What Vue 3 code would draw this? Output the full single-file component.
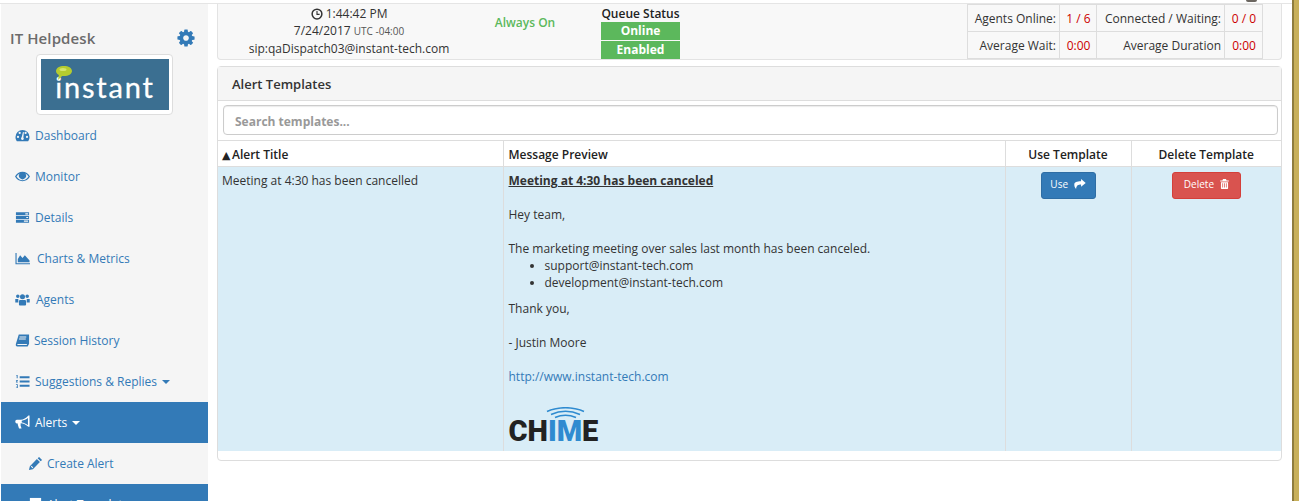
<script setup>
import { ref } from "vue";

const search = ref("");

const cog = "M1152 896q0-106-75-181t-181-75-181 75-75 181 75 181 181 75 181-75 75-181zm512-109v222q0 12-8 23t-20 13l-185 28q-19 54-39 91 35 50 107 138 10 12 10 25t-9 23q-27 37-99 108t-94 71q-12 0-26-9l-138-108q-44 23-91 38-16 136-29 186-7 28-36 28h-222q-14 0-24.5-8.5t-11.5-21.5l-28-184q-49-16-90-37l-141 107q-10 9-25 9-14 0-25-11-126-114-165-168-7-10-7-23 0-12 8-23 15-21 51-66.5t54-70.5q-27-50-41-99l-183-27q-13-2-21-12.5t-8-23.5v-222q0-12 8-23t19-13l186-28q14-46 39-92-40-57-107-138-10-12-10-24 0-10 9-23 26-36 98.5-107.5t94.5-71.5q13 0 26 10l138 107q44-23 91-38 16-136 29-186 7-28 36-28h222q14 0 24.5 8.5t11.5 21.5l28 184q49 16 90 37l142-107q9-9 24-9 13 0 25 10 129 119 165 170 7 8 7 22 0 12-8 23-15 21-51 66.5t-54 70.5q26 50 41 98l183 28q13 2 21 12.5t8 23.5z";

const icons = {
  dashboard: "M8 2a7.500 7.500 0 0 0-7.500 7.500c0 1.800.5 3.200 1.500 4.500h12c1-1.300 1.500-2.700 1.500-4.500A7.500 7.500 0 0 0 8 2zM3.200 10.700a1.200 1.200 0 1 1 0-2.400 1.200 1.200 0 0 1 0 2.400zM5 6.500a1.200 1.200 0 1 1 0-2.400 1.200 1.200 0 0 1 0 2.400zM8 12.800a1.600 1.600 0 0 1-.9-2.900L8.500 4.300l1 .2-.6 5.600A1.600 1.600 0 0 1 8 12.800zM11.300 6.500a1.200 1.200 0 1 1 0-2.400 1.200 1.200 0 0 1 0 2.400zM12.800 10.700a1.200 1.200 0 1 1 0-2.400 1.200 1.200 0 0 1 0 2.400z",
  eye: "M8 3C4.600 3 1.700 5 0 8c1.700 3 4.600 5 8 5s6.300-2 8-5c-1.700-3-4.600-5-8-5zM8 11.900c-2.600 0-4.900-1.500-6.400-3.900.9-1.400 2-2.500 3.400-3.200A3.800 3.800 0 1 0 11 4.800c1.400.7 2.500 1.800 3.400 3.200-1.500 2.400-3.800 3.900-6.400 3.900z",
  tasks: "M1 2.500h14v3.200H1zM1 6.400h14v3.200H1zM1 10.300h14v3.200H1zM11 3.500v1.200h3V3.500zM12 7.400v1.200h2V7.400zM9.500 11.300v1.200H14v-1.200z",
  chart: "M.5 2h1.200v11h14.300v1.200H.5zM3 12V8.500L5.500 4.500 8 7.500l2.500-3L15.500 10v2z",
  users: "M3 2.600a1.900 1.900 0 1 1 0 3.800 1.900 1.900 0 0 1 0-3.800zM13 2.600a1.900 1.900 0 1 1 0 3.800 1.900 1.900 0 0 1 0-3.800zM8 2.400a2.700 2.700 0 1 1 0 5.400 2.700 2.700 0 0 1 0-5.400zM.3 7.500h3.200v3.600H.3zM12.500 7.500h3.200v3.600h-3.200zM4.200 9.700C4.200 8.900 5 8.400 5.800 8.400h4.400c.8 0 1.600.5 1.600 1.300v3.600c0 .7-.6 1.200-1.300 1.200H5.500c-.7 0-1.300-.5-1.300-1.200z",
  book: "M4 1.500h11v10L13.500 14.500H2.500C1 14.500.5 13 1 11.500zM4.800 3.800v1h7.200v-1zM4.300 5.800v1h7.200v-1zM3.300 11.800c-.6 0-.9.500-.9 1.100h10l.6-1.100z",
  list: "M5 2.500h10.500v2H5zM5 7h10.500v2H5zM5 11.500h10.500v2H5zM1.500 1h1.300v3.500h-1V2h-.3zM1 6.500h2v.8l-1 1H3V9H1v-.7l1.100-1.100H1zM1 11h2v4H1v-.7h1.200v-.7H1.500V13h.7v-1.300H1z",
  bullhorn: "M15.500.5v12h-1.200C12 10.500 9 9 6 8.800v2.700l1 3H4.300L3 10.500V9H2C.9 9 .3 8 .3 7S.9 5 2 5h4c3 0 6-2 8.300-4.500zM13.800 3.200C12 4.800 9.500 5.800 7.200 6v1.900c2.300.3 4.800 1.300 6.600 2.900z",
  pencil: "M11.800 1l3.200 3.200-1.500 1.500-3.200-3.200zM9.500 3.300l3.200 3.200L5.200 14 1 15l1-4.200zM3 11.200l1.800 1.800.8-.8-1.800-1.800z",
  doc: "M2 1h12v14H2z",
};

const navItems = [
  { label: "Dashboard", icon: "dashboard", gap: 5 },
  { label: "Monitor", icon: "eye", gap: 5 },
  { label: "Details", icon: "tasks", gap: 5 },
  { label: "Charts & Metrics", icon: "chart", gap: 7 },
  { label: "Agents", icon: "users", gap: 6 },
  { label: "Session History", icon: "book", gap: 4 },
  { label: "Suggestions & Replies", icon: "list", gap: 5, caret: true },
  { label: "Alerts", icon: "bullhorn", gap: 5, caret: true, active: true },
  { label: "Create Alert", icon: "pencil", gap: 4, sub: true },
  { label: "Alert Templates", icon: "doc", gap: 4, sub: true, active: true },
];
</script>

<template>
  <div class="page">
    <div class="top-tab"></div>
    <div class="layout">
      <aside class="sidebar">
        <div class="brand">
          <span class="brand-name">IT Helpdesk</span>
          <svg class="gear" viewBox="0 0 1792 1792"><path :d="cog" /></svg>
        </div>
        <div class="logo-frame">
          <div class="logo">
            <svg class="bubble" viewBox="0 0 16 15">
              <path d="M8 0c4.400 0 8 1.900 8 5s-3.600 5-8 5c-.7 0-1.300 0-1.900-.1L2 14l.9-5.100C1.100 8 0 6.600 0 5 0 1.900 3.600 0 8 0z" fill="#b5cc2f" />
              <ellipse cx="7" cy="3.500" rx="3.500" ry="1.600" fill="#d5e56e" />
            </svg>
            <span class="logo-text">instant</span>
          </div>
        </div>
        <nav class="nav">
          <a
            v-for="item in navItems"
            :key="item.label"
            class="nav-item"
            :class="{ active: item.active, sub: item.sub }"
          >
            <svg class="nav-icon" viewBox="0 0 16 16" :style="{ marginRight: item.gap + 'px' }">
              <path :d="icons[item.icon]" fill-rule="evenodd" />
            </svg>
            <span>{{ item.label }}</span>
            <span v-if="item.caret" class="caret"></span>
          </a>
        </nav>
      </aside>

      <main class="content">
        <section class="status-panel">
          <div class="clock-col">
            <div>
              <svg class="clock" viewBox="0 0 16 16">
                <circle cx="8" cy="8" r="6.500" fill="none" stroke="#333" stroke-width="2" />
                <path d="M8 4v4.500h3.500" fill="none" stroke="#333" stroke-width="1.500" />
              </svg>
              1:44:42 PM
            </div>
            <div>7/24/2017 <small>UTC -04:00</small></div>
            <div>sip:qaDispatch03@instant-tech.com</div>
          </div>
          <div class="always-on">Always On</div>
          <div class="queue">
            <div class="queue-title">Queue Status</div>
            <div class="queue-badge">Online</div>
            <div class="queue-badge">Enabled</div>
          </div>
          <table class="stats">
            <tbody>
              <tr>
                <td class="s1">Agents Online:</td>
                <td class="s2 val">1 / 6</td>
                <td class="s3">Connected / Waiting:</td>
                <td class="s4 val">0 / 0</td>
              </tr>
              <tr>
                <td class="s1">Average Wait:</td>
                <td class="s2 val">0:00</td>
                <td class="s3">Average Duration</td>
                <td class="s4 val">0:00</td>
              </tr>
            </tbody>
          </table>
        </section>

        <section class="templates-panel">
          <div class="panel-heading">Alert Templates</div>
          <div class="search-wrap">
            <input v-model="search" class="search" type="text" placeholder="Search templates..." />
          </div>
          <table class="templates">
            <thead>
              <tr>
                <th class="c-title"><span class="sort">▲</span>Alert Title</th>
                <th class="c-preview">Message Preview</th>
                <th class="c-use">Use Template</th>
                <th class="c-delete">Delete Template</th>
              </tr>
            </thead>
            <tbody>
              <tr>
                <td class="c-title">Meeting at 4:30 has been cancelled</td>
                <td class="c-preview">
                  <div class="msg-title">Meeting at 4:30 has been canceled</div>
                  <p class="msg-line">Hey team,</p>
                  <p class="msg-line">The marketing meeting over sales last month has been canceled.</p>
                  <ul class="msg-list">
                    <li>support@instant-tech.com</li>
                    <li>development@instant-tech.com</li>
                  </ul>
                  <p class="msg-thanks">Thank you,</p>
                  <p class="msg-line">- Justin Moore</p>
                  <p class="msg-line"><a class="link">http://www.instant-tech.com</a></p>
                  <div class="chime">
                    <svg class="chime-waves" viewBox="0 0 39 12">
                      <path d="M1 4.500C12-.5 27-.5 38 4.500" />
                      <path d="M5 7.500C14 3.500 25 3.500 34 7.500" />
                      <path d="M9 10.500C16 7.500 23 7.500 30 10.500" />
                    </svg>
                    <span class="chime-text">CH<em>IM</em>E</span>
                  </div>
                </td>
                <td class="c-use">
                  <button type="button" class="btn btn-use">
                    Use
                    <svg class="btn-icon share" viewBox="0 0 16 14">
                      <path d="M9.500 0L16 5.500 9.500 11V7.800C5.500 7.800 3 8.800 2.500 14 .5 11.500 0 9.500 0 8c0-3.500 3.500-4.700 9.500-4.700z" />
                    </svg>
                  </button>
                </td>
                <td class="c-delete">
                  <button type="button" class="btn btn-delete">
                    Delete
                    <svg class="btn-icon trash" viewBox="0 0 12 14">
                      <path fill-rule="evenodd" d="M4 0h4l1 2h3v1.500H0V2h3zM1 4.500h10V13a1 1 0 0 1-1 1H2a1 1 0 0 1-1-1zM3 6v6h1V6zM5.500 6v6h1V6zM8 6v6h1V6z" />
                    </svg>
                  </button>
                </td>
              </tr>
            </tbody>
          </table>
        </section>
      </main>

      <div class="edge"></div>
    </div>
  </div>
</template>

<style>
html,
body {
  margin: 0;
  background: #fff;
  overflow: hidden;
}
</style>

<style scoped>
.page {
  position: relative;
  width: 1299px;
  height: 501px;
  overflow: hidden;
  box-sizing: border-box;
  padding-top: 3px;
  font-family: "Open Sans", "Noto Sans", sans-serif;
  font-size: 12px;
  color: #333;
}

.top-tab {
  position: absolute;
  left: 1246px;
  top: 0;
  width: 11px;
  height: 2px;
  background: #6b6660;
  border-radius: 0 0 3px 3px;
}

.layout {
  display: flex;
  height: 498px;
  border-top: 1px solid #e5e5e5;
}

/* sidebar */
.sidebar {
  width: 207px;
  margin-left: 1px;
  flex-shrink: 0;
  background: #f5f5f5;
  overflow: hidden;
}

.brand {
  display: flex;
  justify-content: space-between;
  align-items: center;
  height: 50px;
  box-sizing: border-box;
  padding: 17px 12px 0 9px;
}

.brand-name {
  font-size: 15px;
  font-weight: 600;
  letter-spacing: 0.1px;
  color: #6b6b6b;
}

.gear {
  width: 20px;
  height: 20px;
  fill: #337ab7;
}

.logo-frame {
  width: 137px;
  height: 61px;
  box-sizing: border-box;
  margin-left: 35px;
  padding: 4px 3px 4px 4px;
  background: #fff;
  border: 1px solid #ddd;
  border-radius: 4px;
}

.logo {
  position: relative;
  height: 51px;
  background: #3b6f91;
  display: flex;
  justify-content: center;
  align-items: flex-end;
  padding-bottom: 5px;
  box-sizing: border-box;
}

.bubble {
  position: absolute;
  left: 15px;
  top: 7px;
  width: 16px;
  height: 15px;
}

.logo-text {
  font-family: "Lato", sans-serif;
  font-size: 29px;
  line-height: 36px;
  letter-spacing: 1.800px;
  color: #fff;
  -webkit-text-stroke: 0.3px #fff;
}

.nav-item {
  display: flex;
  align-items: center;
  height: 41px;
  box-sizing: border-box;
  padding-left: 14px;
  color: #337ab7;
  white-space: nowrap;
}

.nav-item.sub {
  padding-left: 27px;
}

.nav-item.active {
  background: #337ab7;
  color: #fff;
}

.nav-icon {
  width: 15px;
  height: 15px;
  fill: currentColor;
  flex-shrink: 0;
}

.caret {
  width: 0;
  height: 0;
  margin-left: 5px;
  border-top: 4px solid currentColor;
  border-left: 4px solid transparent;
  border-right: 4px solid transparent;
}

/* main column */
.content {
  width: 1065px;
  margin-left: 9px;
  flex-shrink: 0;
}

.status-panel {
  display: flex;
  height: 56px;
  box-sizing: border-box;
  background: #f8f8f8;
  border: 1px solid #e3e3e3;
  border-top: 0;
  border-radius: 0 0 4px 4px;
}

.clock-col {
  width: 262px;
  text-align: center;
  line-height: 17px;
  padding-top: 1px;
}

.clock-col small {
  font-size: 10px;
  color: #555;
}

.clock {
  width: 12px;
  height: 12px;
  vertical-align: -2px;
}

.always-on {
  width: 90px;
  text-align: center;
  font-weight: 600;
  color: #5cb85c;
  padding-top: 10px;
}

.queue {
  width: 79px;
  margin-left: 31px;
  text-align: center;
}

.queue-title {
  font-weight: 600;
  color: #222;
  line-height: 18px;
  padding-top: 1px;
  height: 18px;
  box-sizing: border-box;
}

.queue-badge {
  height: 18px;
  margin-bottom: 1px;
  line-height: 18px;
  background: #5cb85c;
  color: #fff;
  font-weight: 700;
}

.stats {
  margin-left: 287px;
  height: 54px;
  border-collapse: collapse;
  table-layout: fixed;
  width: 295px;
  align-self: flex-start;
}

.stats td {
  border: 1px solid #ddd;
  padding: 0 3px 0 4px;
  text-align: right;
  white-space: nowrap;
  height: 27px;
  box-sizing: border-box;
}

.stats .s1 { width: 92px; }
.stats .s2 { width: 37px; text-align: center; }
.stats .s3 { width: 128px; }
.stats .s4 { width: 38px; text-align: center; }
.stats .val { color: #c00; }

.templates-panel {
  height: 395px;
  box-sizing: border-box;
  margin-top: 6px;
  background: #fff;
  border: 1px solid #ddd;
  border-radius: 4px;
}

.panel-heading {
  height: 34px;
  box-sizing: border-box;
  padding-left: 14px;
  line-height: 34px;
  font-size: 13px;
  font-weight: 600;
  background: #f5f5f5;
  border-bottom: 1px solid #ddd;
}

.search-wrap {
  padding: 4px 3px 5px 5px;
  border-bottom: 1px solid #ddd;
}

.search {
  display: block;
  width: 100%;
  height: 30px;
  box-sizing: border-box;
  padding: 2px 11px 0;
  font: 700 12px "Open Sans", "Noto Sans", sans-serif;
  border: 1px solid #ccc;
  border-radius: 4px;
  box-shadow: inset 0 1px 1px rgba(0, 0, 0, 0.08);
  outline: none;
}

.search::placeholder {
  color: #999;
}

.templates {
  width: 1063px;
  border-collapse: collapse;
  table-layout: fixed;
}

.templates th {
  height: 25px;
  box-sizing: border-box;
  padding: 2px 4px 0;
  font-weight: 600;
  text-align: left;
  color: #222;
  border-bottom: 1px solid #ddd;
}

.templates td {
  height: 285px;
  box-sizing: border-box;
  padding: 5px 4px 4px;
  vertical-align: top;
  background: #d9edf7;
  line-height: 17px;
}

.templates th + th,
.templates td + td {
  border-left: 1px solid #ddd;
}

.c-title { width: 285px; }
.c-preview { width: 502px; }
.c-use { width: 126px; }

.templates .c-preview {
  padding-left: 5px;
}

.templates .c-use,
.templates .c-delete {
  text-align: center;
}

.sort {
  display: inline-block;
  width: 10px;
  font-family: "DejaVu Sans", sans-serif;
  font-size: 11px;
}

.msg-title {
  font-weight: 700;
  text-decoration: underline;
}

.msg-line {
  margin: 17px 0 0;
}

.msg-list {
  margin: 0;
  padding-left: 36px;
}

.msg-thanks {
  margin: 9px 0 0;
}

.link {
  color: #337ab7;
}

.chime {
  margin-top: 22px;
  width: 92px;
}

.chime-waves {
  display: block;
  width: 39px;
  height: 12px;
  margin: 0 0 0 37px;
  fill: none;
  stroke: #2f8bd0;
  stroke-width: 1.600;
}

.chime-text {
  display: block;
  font-family: "Roboto", "Liberation Sans", sans-serif;
  font-size: 29px;
  line-height: 24px;
  font-weight: 900;
  color: #222;
}

.chime-text em {
  font-style: normal;
  color: #2f8bd0;
}

.btn {
  height: 27px;
  padding: 0 0 2px;
  font: 400 10px "Open Sans", "Noto Sans", sans-serif;
  color: #fff;
  border-radius: 3px;
  border: 1px solid;
}

.btn-use {
  width: 55px;
  background: #337ab7;
  border-color: #2e6da4;
}

.btn-delete {
  width: 69px;
  background: #d9534f;
  border-color: #d43f3a;
}

.btn-icon {
  fill: #fff;
  vertical-align: -1px;
  margin-left: 3px;
}

.share {
  width: 12px;
  height: 10px;
}

.trash {
  width: 9px;
  height: 10px;
}

.edge {
  width: 7px;
  margin-left: 10px;
  margin-top: -4px;
  height: 501px;
  background: #c8b05a;
  border-left: 2px solid #8f7d3e;
  box-sizing: border-box;
}
</style>
